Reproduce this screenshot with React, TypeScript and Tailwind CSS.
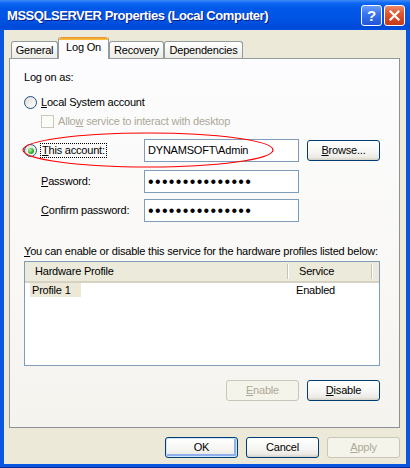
import React from "react";

const font = "font-['Liberation_Sans',Arial,sans-serif] text-[11px] leading-[13px] tracking-[-0.2px] text-black";

function U({ children }: { children: React.ReactNode }) {
  return <span className="underline underline-offset-[1px]">{children}</span>;
}

function Btn({ children, disabled, def, className = "" }: { children: React.ReactNode; disabled?: boolean; def?: boolean; className?: string }) {
  if (disabled) {
    return (
      <div className={`flex h-[21px] w-[73px] items-center justify-center rounded-[3px] border border-[#C9C7BA] bg-[#F5F4EA] text-[#ACA899] ${className}`}>
        {children}
      </div>
    );
  }
  return (
    <div
      className={`flex h-[21px] w-[73px] items-center justify-center rounded-[3px] border border-[#003C74] bg-[linear-gradient(to_bottom,#FFFFFF,#F6F6F3_55%,#ECEBE6_85%,#D6D0C5)] ${
        def ? "shadow-[inset_0_0_0_1px_#CEE7FF,inset_-1px_-1px_0_2px_#8FB0EC]" : ""
      } ${className}`}
    >
      {children}
    </div>
  );
}

function Radio({ checked }: { checked?: boolean }) {
  return (
    <span className="flex h-[13px] w-[13px] shrink-0 items-center justify-center rounded-full border border-[#1C5180] bg-[linear-gradient(135deg,#DCDBD3,#F4F3EE_60%,#FFFFFF)]">
      {checked && <span className="h-[6px] w-[6px] rounded-full bg-[radial-gradient(circle_at_35%_35%,#B8F5B0,#2FB02F_55%,#188A18)]" />}
    </span>
  );
}

function Input({ children }: { children?: React.ReactNode }) {
  return <div className="flex h-[23px] w-[155px] shrink-0 items-center border border-[#7F9DB9] bg-white pl-[3px]">{children}</div>;
}

function Dots() {
  return (
    <span className="font-['Liberation_Sans',Arial,sans-serif] text-[16px] leading-[13px] tracking-[1.35px] text-black">
      •••••••••••••••
    </span>
  );
}

function Tab({ label, active, w }: { label: string; active?: boolean; w: string }) {
  if (active) {
    return (
      <div className={`relative z-10 -mb-[1px] flex h-[22px] ${w} flex-col rounded-t-[3px] border-x border-[#919B9C] bg-[#FCFCFE]`}>
        <div className="h-[3px] rounded-t-[3px] bg-[linear-gradient(to_bottom,#E68B2C,#FFC73C)]" />
        <div className="flex flex-1 items-center justify-center pb-[4px]">{label}</div>
      </div>
    );
  }
  return (
    <div className={`flex h-[17px] ${w} items-center justify-center rounded-t-[3px] border border-b-0 border-[#919B9C] bg-[linear-gradient(to_bottom,#FFFFFF,#F3F3EF_60%,#ECEBE6)]`}>
      {label}
    </div>
  );
}

export default function App() {
  return (
    <div className={`flex h-[468px] w-[410px] flex-col bg-[#0A56DF] ${font}`}>
      {/* title bar */}
      <div className="flex h-[30px] shrink-0 items-center bg-[linear-gradient(to_bottom,#3D8DF5_0px,#0F66F2_3px,#0058E8_8px,#0054E3_20px,#0049D9_27px,#0050E0_30px)] pl-[7px] pr-[5px]">
        <div className="flex-1 font-['Liberation_Sans',Arial,sans-serif] text-[13px] font-bold tracking-[-0.45px] text-white [text-shadow:1px_1px_0_#0A1E8C]">
          MSSQLSERVER Properties (Local Computer)
        </div>
        <div className="flex h-[21px] w-[21px] items-center justify-center rounded-[3px] border border-white bg-[linear-gradient(to_bottom,#6A9DF8,#3A76F0_40%,#1F56DA)] font-['Liberation_Sans',Arial,sans-serif] text-[15px] font-bold text-white">
          ?
        </div>
        <div className="ml-[2px] flex h-[21px] w-[21px] items-center justify-center rounded-[3px] border border-white bg-[linear-gradient(to_bottom,#EC8A68,#E0552F_40%,#C8381A)]">
          <svg width="11" height="11" viewBox="0 0 11 11">
            <path d="M1.5 1.5 L9.5 9.5 M9.5 1.5 L1.5 9.5" stroke="white" strokeWidth="2.2" strokeLinecap="square" />
          </svg>
        </div>
      </div>

      {/* body */}
      <div className="mx-[4px] flex flex-1 flex-col bg-[#ECE9D8] pl-[5px] pr-[6px]">
        <div className="ml-[2px] mt-[6px] flex h-[22px] items-end">
          <Tab label="General" w="w-[47px]" />
          <Tab label="Log On" active w="w-[51px]" />
          <Tab label="Recovery" w="w-[55px]" />
          <Tab label="Dependencies" w="w-[79px]" />
        </div>

        <div className="relative flex h-[370px] flex-col border border-[#919B9C] border-b-[#8C9193] border-r-[#8C9193] bg-[linear-gradient(to_bottom,#FCFCFE,#F9F8F5_60%,#F4F3EE)] pl-[14px] pr-[19px]">
          <div className="mt-[12px] h-[13px]">Log on as:</div>

          <div className="mt-[12px] flex h-[13px] items-center">
            <Radio />
            <span className="ml-[4px]">
              <U>L</U>ocal System account
            </span>
          </div>

          <div className="mt-[6px] flex h-[13px] items-center pl-[17px] text-[#ACA899]">
            <span className="h-[13px] w-[13px] border border-[#CAC8BB] bg-[#FBFBF8]" />
            <span className="ml-[4px]">
              Allo<U>w</U> service to interact with desktop
            </span>
          </div>

          <div className="mt-[11px] flex h-[23px] items-center">
            <div className="flex w-[120px] items-center">
              <Radio checked />
              <span className="ml-[3px] border border-dotted border-black px-[1px]">
                <U>T</U>his account:
              </span>
            </div>
            <Input>DYNAMSOFT\Admin</Input>
            <Btn className="ml-[8px]">
              <span>
                <U>B</U>rowse...
              </span>
            </Btn>
          </div>

          <div className="mt-[8px] flex h-[23px] items-center pl-[17px]">
            <div className="w-[103px]">
              <U>P</U>assword:
            </div>
            <Input>
              <Dots />
            </Input>
          </div>

          <div className="mt-[6px] flex h-[23px] items-center pl-[17px]">
            <div className="w-[103px]">
              <U>C</U>onfirm password:
            </div>
            <Input>
              <Dots />
            </Input>
          </div>

          <div className="mt-[23px] h-[13px]">
            <U>Y</U>ou can enable or disable this service for the hardware profiles listed below:
          </div>

          <div className="mt-[3px] flex h-[105px] flex-col border border-[#7F9DB9] bg-white">
            <div className="flex h-[21px] items-center border-b-[2px] border-[#D6D2C2] bg-[#EBEADB]">
              <div className="flex h-full w-[264px] items-center justify-between pl-[10px]">
                <span>Hardware Profile</span>
                <span className="h-[15px] w-[2px] border-l border-r border-l-[#C7C5B2] border-r-white" />
              </div>
              <div className="flex h-full w-[84px] items-center justify-between pl-[10px]">
                <span>Service</span>
                <span className="h-[15px] w-[2px] border-l border-r border-l-[#C7C5B2] border-r-white" />
              </div>
            </div>
            <div className="flex h-[14px] items-center">
              <div className="w-[264px] pl-[5px]">
                <span className="bg-[#ECE9D8] py-[1px] pl-[2px] pr-[10px]">Profile 1</span>
              </div>
              <div className="pl-[7px]">Enabled</div>
            </div>
          </div>

          <div className="mt-[14px] flex justify-end gap-[8px]">
            <Btn disabled>
              <span>
                <U>E</U>nable
              </span>
            </Btn>
            <Btn>
              <span>
                <U>D</U>isable
              </span>
            </Btn>
          </div>

          <svg className="pointer-events-none absolute left-0 top-0" width="392" height="370">
            <ellipse cx="138" cy="91" rx="125" ry="17" fill="none" stroke="#FF0000" strokeWidth="1.2" />
          </svg>
        </div>

        <div className="mt-[9px] flex justify-end gap-[8px]">
          <Btn def>OK</Btn>
          <Btn>Cancel</Btn>
          <Btn disabled>
            <span>
              <U>A</U>pply
            </span>
          </Btn>
        </div>
      </div>
      <div className="mx-[4px] h-[3px] bg-[#0A56DF]" />
      <div className="h-[1px] bg-[#002B9A]" />
    </div>
  );
}
